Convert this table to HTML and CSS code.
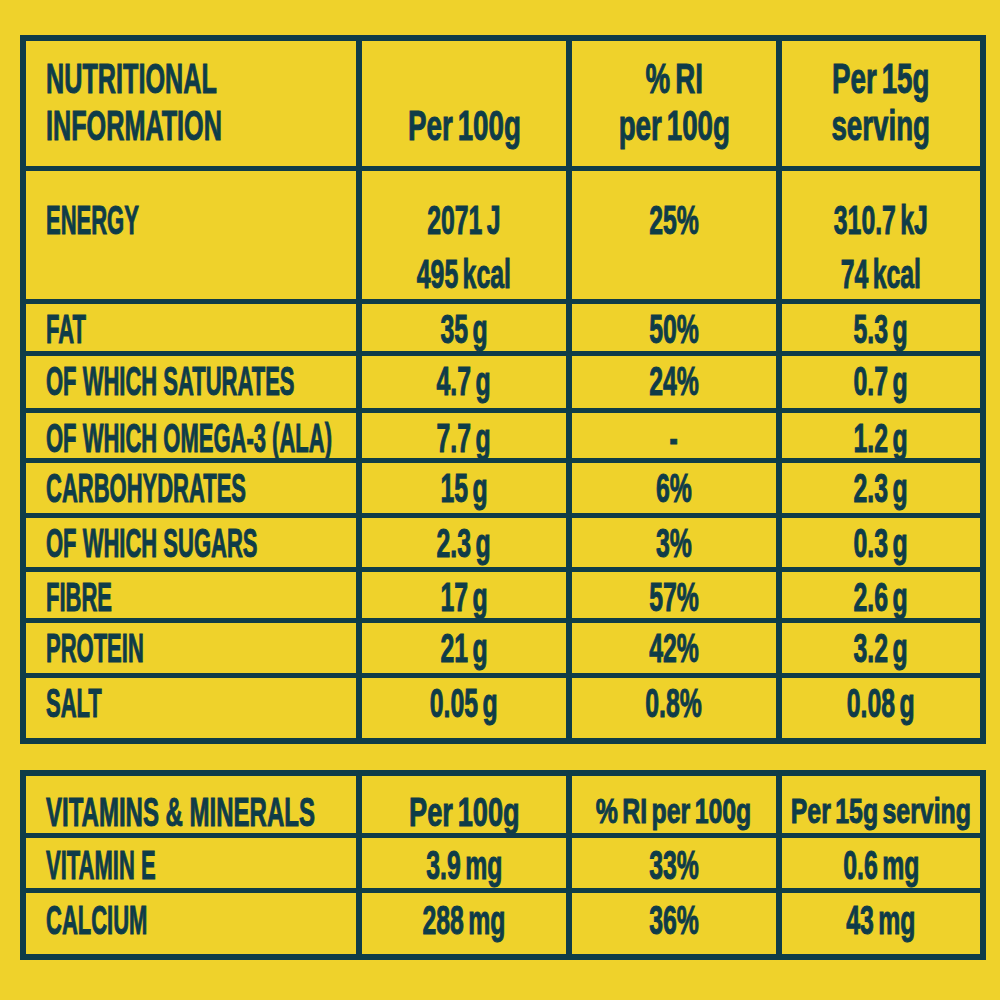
FILE: index.html
```html
<!DOCTYPE html>
<html lang="en">
<head>
<meta charset="utf-8">
<title>Nutritional information</title>
<link rel="stylesheet" href="styles.css">
</head>
<body>
<main class="page">
  <section class="table main">
    <div class="row head">
      <div class="c name"><span class="t">NUTRITIONAL<br>INFORMATION</span></div>
      <div class="c"><span class="t">Per 100g</span></div>
      <div class="c"><span class="t">% RI<br>per 100g</span></div>
      <div class="c"><span class="t">Per 15g<br>serving</span></div>
    </div>
    <div class="row energy">
      <div class="c name"><span class="t">ENERGY</span></div>
      <div class="c"><span class="t">2071 J<br>495 kcal</span></div>
      <div class="c"><span class="t">25%</span></div>
      <div class="c"><span class="t">310.7 kJ<br>74 kcal</span></div>
    </div>
    <div class="row">
      <div class="c name"><span class="t">FAT</span></div>
      <div class="c"><span class="t">35 g</span></div>
      <div class="c"><span class="t">50%</span></div>
      <div class="c"><span class="t">5.3 g</span></div>
    </div>
    <div class="row">
      <div class="c name"><span class="t">OF WHICH SATURATES</span></div>
      <div class="c"><span class="t">4.7 g</span></div>
      <div class="c"><span class="t">24%</span></div>
      <div class="c"><span class="t">0.7 g</span></div>
    </div>
    <div class="row">
      <div class="c name"><span class="t">OF WHICH OMEGA-3 (ALA)</span></div>
      <div class="c"><span class="t">7.7 g</span></div>
      <div class="c"><span class="t">-</span></div>
      <div class="c"><span class="t">1.2 g</span></div>
    </div>
    <div class="row">
      <div class="c name"><span class="t">CARBOHYDRATES</span></div>
      <div class="c"><span class="t">15 g</span></div>
      <div class="c"><span class="t">6%</span></div>
      <div class="c"><span class="t">2.3 g</span></div>
    </div>
    <div class="row">
      <div class="c name"><span class="t">OF WHICH SUGARS</span></div>
      <div class="c"><span class="t">2.3 g</span></div>
      <div class="c"><span class="t">3%</span></div>
      <div class="c"><span class="t">0.3 g</span></div>
    </div>
    <div class="row">
      <div class="c name"><span class="t">FIBRE</span></div>
      <div class="c"><span class="t">17 g</span></div>
      <div class="c"><span class="t">57%</span></div>
      <div class="c"><span class="t">2.6 g</span></div>
    </div>
    <div class="row">
      <div class="c name"><span class="t">PROTEIN</span></div>
      <div class="c"><span class="t">21 g</span></div>
      <div class="c"><span class="t">42%</span></div>
      <div class="c"><span class="t">3.2 g</span></div>
    </div>
    <div class="row">
      <div class="c name"><span class="t">SALT</span></div>
      <div class="c"><span class="t">0.05 g</span></div>
      <div class="c"><span class="t">0.8%</span></div>
      <div class="c"><span class="t">0.08 g</span></div>
    </div>
  </section>

  <section class="table vit">
    <div class="row subhead">
      <div class="c name"><span class="t">VITAMINS &amp; MINERALS</span></div>
      <div class="c"><span class="t">Per 100g</span></div>
      <div class="c small"><span class="t">% RI per 100g</span></div>
      <div class="c small"><span class="t">Per 15g serving</span></div>
    </div>
    <div class="row">
      <div class="c name"><span class="t">VITAMIN E</span></div>
      <div class="c"><span class="t">3.9 mg</span></div>
      <div class="c"><span class="t">33%</span></div>
      <div class="c"><span class="t">0.6 mg</span></div>
    </div>
    <div class="row">
      <div class="c name"><span class="t">CALCIUM</span></div>
      <div class="c"><span class="t">288 mg</span></div>
      <div class="c"><span class="t">36%</span></div>
      <div class="c"><span class="t">43 mg</span></div>
    </div>
  </section>
</main>
</body>
</html>
```

FILE: styles.css
```css
:root {
  --bg: #efd22b;
  --ink: #0f3c48;
}

html, body {
  margin: 0;
  background: var(--bg);
}

body {
  font-family: "Liberation Sans", Arial, sans-serif;
  font-weight: 700;
  color: var(--ink);
}

.page {
  display: flex;
  flex-direction: column;
  gap: 26px;
  padding: 35px 0 0 20px;
}

.table {
  display: grid;
  box-sizing: border-box;
  width: 966px;
  grid-template-columns: 330px 204px 204px 198px;
  column-gap: 6px;
  row-gap: 5px;
  border: 6px solid var(--ink);
  background: var(--ink);
}

.main {
  grid-template-rows: 125px 128px 47px 52px 45px 50px 49px 46px 50px 60px;
}

.vit {
  grid-template-rows: 57px 50px 61px;
}

.row {
  display: contents;
}

.c {
  background: var(--bg);
  display: flex;
  justify-content: center;
  align-items: flex-start;
  padding-top: 5px;
  font-size: 40px;
  line-height: 40px;
  min-width: 0;
}

.c.name {
  justify-content: flex-start;
  padding-left: 20px;
}

.t {
  display: inline-block;
  flex: none;
  white-space: nowrap;
  text-align: center;
  word-spacing: -0.1em;
  -webkit-text-stroke: 1px var(--ink);
  transform: scaleX(0.62);
  transform-origin: 50% 0;
}

.name .t {
  text-align: left;
  word-spacing: 0;
  transform: scaleX(0.55);
  transform-origin: 0 0;
}

/* header of the main table */
.head .c {
  align-items: flex-end;
  padding-top: 0;
  padding-bottom: 17px;
  font-size: 42px;
  line-height: 47px;
}

.head .t {
  transform: scaleX(0.66);
}

.head .name .t {
  transform: scaleX(0.6);
}

/* energy row, two lines */
.energy .c {
  padding-top: 22px;
  line-height: 54px;
}

/* vitamins table */
.vit .c {
  padding-top: 7px;
}

.vit .subhead .c {
  padding-top: 16px;
}

.vit .subhead .t {
  transform: scaleX(0.68);
}

.vit .subhead .name .t {
  transform: scaleX(0.6);
}

.vit .subhead .c.small {
  padding-top: 15px;
  font-size: 35px;
}

.vit .subhead .small .t {
  transform: scaleX(0.71);
}
```
